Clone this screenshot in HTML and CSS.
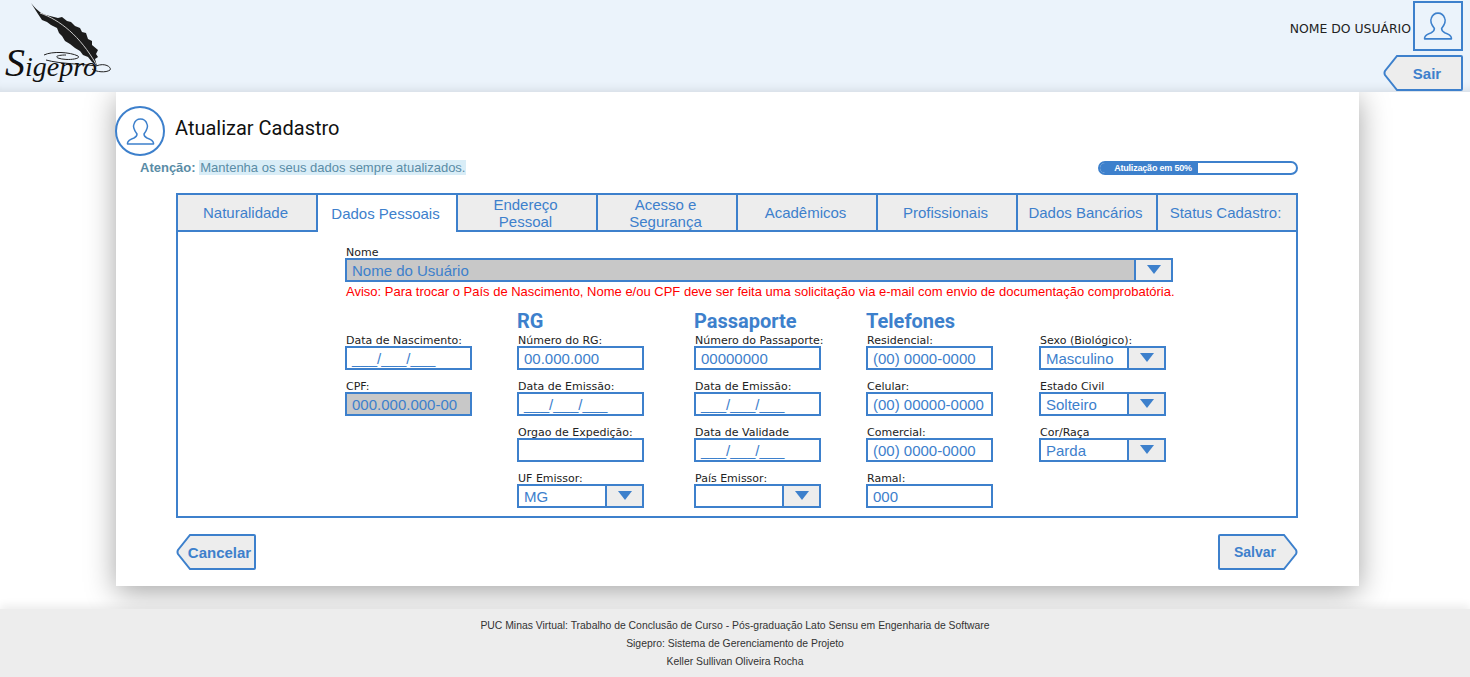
FILE: index.html
```html
<!DOCTYPE html>
<html lang="pt-BR">
<head>
<meta charset="UTF-8" />
<title>Sigepro - Atualizar Cadastro</title>
<link rel="stylesheet" href="styles.css">
</head>
<body>

<header class="topo">
  <svg class="logo" width="120" height="92" viewBox="0 0 120 92">
    <path class="pena" d="M31 3 C36 9 40 13 46 15 L58 18 L62 17 L67 21 L71 22 L75 26 L80 28 L82 32 L86 33 L88 39 L92 41 L92 45 L98 50 L96 54 L98 57 L95 59 L97 66 L92 62 L88 57 L83 55 L80 51 L75 48 L70 44 L65 41 L62 36 L59 33 L57 28 L51 25 L47 22 L42 20 L38 14 Z"/>
    <path class="veio" d="M40 13 C60 20 80 36 96 64"/>
    <path class="arabesco" d="M44 55 C52 51 70 52 78 56 C82 59 66 61 58 58 C54 56 60 55 66 55 M46 60 C60 64 84 64 96 66 C106 62 112 68 110 70 C106 73 96 72 92 69"/>
    <text class="logo-nome" x="5" y="76"><tspan class="logo-inicial">S</tspan>igepro</text>
  </svg>
  <div class="usuario">
    <div class="usuario-linha">
      <span class="usuario-nome">NOME DO USUÁRIO</span>
      <div class="usuario-foto">
        <svg width="34" height="34" viewBox="9 10 33 31"><path class="pessoa" d="M22 28c-3-4-4-8-3-10 1-3 3-5 6.500-5s5.500 2 6.500 5c1 2 0 6-3 10 0 2 1 3 3 4 3 1 6 2 6.500 5v1h-26v-1c.5-3 3.500-4 6.500-5 2-1 3-2 3-4z"/></svg>
      </div>
    </div>
    <button class="seta btn-sair" type="button">
      <svg class="seta-fundo" width="80" height="36" viewBox="0 0 80 36"><path d="M14 1 H78 Q79 1 79 2 V34 Q79 35 78 35 H14 L2 20 Q1 18 2 16 Z"/></svg>
      <span>Sair</span>
    </button>
  </div>
</header>

<main class="conteudo">
  <section class="cartao">
    <div class="titulo-linha">
      <svg class="avatar" width="50" height="50" viewBox="0 0 50 50">
        <circle class="avatar-aro" cx="25" cy="25" r="24"/>
        <path class="pessoa" d="M22 28c-3-4-4-8-3-10 1-3 3-5 6.500-5s5.500 2 6.500 5c1 2 0 6-3 10 0 2 1 3 3 4 3 1 6 2 6.500 5v1h-26v-1c.5-3 3.500-4 6.500-5 2-1 3-2 3-4z"/>
      </svg>
      <h1>Atualizar Cadastro</h1>
    </div>

    <div class="aviso-linha">
      <p class="atencao"><strong>Atenção:</strong> <mark>Mantenha os seus dados sempre atualizados.</mark></p>
      <div class="progresso"><div class="progresso-barra" style="width:50%">Atulização em 50%</div></div>
    </div>

    <div class="abas">
      <div class="aba">Naturalidade</div>
      <div class="aba ativa">Dados Pessoais</div>
      <div class="aba">Endereço Pessoal</div>
      <div class="aba">Acesso e Segurança</div>
      <div class="aba">Acadêmicos</div>
      <div class="aba">Profissionais</div>
      <div class="aba">Dados Bancários</div>
      <div class="aba">Status Cadastro:</div>
    </div>

    <div class="painel">
      <label class="rotulo">Nome</label>
      <div class="campo combo bloqueado">
        <span class="valor">Nome do Usuário</span>
        <span class="combo-seta"><i></i></span>
      </div>
      <p class="aviso-erro">Aviso: Para trocar o País de Nascimento, Nome e/ou CPF deve ser feita uma solicitação via e-mail com envio de documentação comprobatória.</p>

      <div class="grade">
        <div class="coluna">
          <h2>&nbsp;</h2>
          <div class="item"><label class="rotulo">Data de Nascimento:</label><div class="campo"><span class="valor">___/___/___</span></div></div>
          <div class="item"><label class="rotulo">CPF:</label><div class="campo bloqueado"><span class="valor">000.000.000-00</span></div></div>
        </div>
        <div class="coluna">
          <h2>RG</h2>
          <div class="item"><label class="rotulo">Número do RG:</label><div class="campo"><span class="valor">00.000.000</span></div></div>
          <div class="item"><label class="rotulo">Data de Emissão:</label><div class="campo"><span class="valor">___/___/___</span></div></div>
          <div class="item"><label class="rotulo">Orgao de Expedição:</label><div class="campo"></div></div>
          <div class="item"><label class="rotulo">UF Emissor:</label><div class="campo combo"><span class="valor">MG</span><span class="combo-seta"><i></i></span></div></div>
        </div>
        <div class="coluna">
          <h2>Passaporte</h2>
          <div class="item"><label class="rotulo">Número do Passaporte:</label><div class="campo"><span class="valor">00000000</span></div></div>
          <div class="item"><label class="rotulo">Data de Emissão:</label><div class="campo"><span class="valor">___/___/___</span></div></div>
          <div class="item"><label class="rotulo">Data de Validade</label><div class="campo"><span class="valor">___/___/___</span></div></div>
          <div class="item"><label class="rotulo">País Emissor:</label><div class="campo combo"><span class="valor"></span><span class="combo-seta"><i></i></span></div></div>
        </div>
        <div class="coluna">
          <h2>Telefones</h2>
          <div class="item"><label class="rotulo">Residencial:</label><div class="campo"><span class="valor">(00) 0000-0000</span></div></div>
          <div class="item"><label class="rotulo">Celular:</label><div class="campo"><span class="valor">(00) 00000-0000</span></div></div>
          <div class="item"><label class="rotulo">Comercial:</label><div class="campo"><span class="valor">(00) 0000-0000</span></div></div>
          <div class="item"><label class="rotulo">Ramal:</label><div class="campo"><span class="valor">000</span></div></div>
        </div>
        <div class="coluna">
          <h2>&nbsp;</h2>
          <div class="item"><label class="rotulo">Sexo (Biológico):</label><div class="campo combo"><span class="valor">Masculino</span><span class="combo-seta"><i></i></span></div></div>
          <div class="item"><label class="rotulo">Estado Civil</label><div class="campo combo"><span class="valor">Solteiro</span><span class="combo-seta"><i></i></span></div></div>
          <div class="item"><label class="rotulo">Cor/Raça</label><div class="campo combo"><span class="valor">Parda</span><span class="combo-seta"><i></i></span></div></div>
        </div>
      </div>
    </div>

    <div class="acoes">
      <button class="seta btn-cancelar" type="button">
        <svg class="seta-fundo" width="80" height="36" viewBox="0 0 80 36"><path d="M14 1 H78 Q79 1 79 2 V34 Q79 35 78 35 H14 L2 20 Q1 18 2 16 Z"/></svg>
        <span>Cancelar</span>
      </button>
      <button class="seta btn-salvar" type="button">
        <svg class="seta-fundo" width="80" height="36" viewBox="0 0 80 36"><path d="M66 1 H2 Q1 1 1 2 V34 Q1 35 2 35 H66 L78 20 Q79 18 78 16 Z"/></svg>
        <span>Salvar</span>
      </button>
    </div>
  </section>
</main>

<footer class="rodape">
  <p>PUC Minas Virtual: Trabalho de Conclusão de Curso - Pós-graduação Lato Sensu em Engenharia de Software</p>
  <p>Sigepro: Sistema de Gerenciamento de Projeto</p>
  <p>Keller Sullivan Oliveira Rocha</p>
</footer>

</body>
</html>
```

FILE: styles.css
```css
* { box-sizing: border-box; }
html, body { height: 100%; }
body { margin: 0; background: #fff; font-family: "Liberation Sans", Arial, sans-serif; color: #3d80cc; overflow: hidden; }

/* topo */
.topo { position: relative; z-index: 1; height: 92px; background: #ebf3fb; display: flex; justify-content: space-between; box-shadow: inset 0 -10px 10px -8px rgba(0,0,0,.1); }
.logo { display: block; }
.pena { fill: #1c1c1c; }
.veio { fill: none; stroke: #c9c9c9; stroke-width: 1; }
.arabesco { fill: none; stroke: #222; stroke-width: 1; }
.logo-nome { font-family: "Liberation Serif", serif; font-style: italic; font-size: 28px; fill: #111; }
.logo-inicial { font-size: 40px; }
.usuario { width: 181px; margin-right: 7px; padding-top: 1px; display: flex; flex-direction: column; align-items: flex-end; gap: 4px; }
.usuario-linha { display: flex; align-items: center; gap: 2px; }
.usuario-nome { font-family: "DejaVu Sans", sans-serif; font-size: 12.400px; color: #222; padding-top: 4px; white-space: nowrap; }
.usuario-foto { width: 50px; height: 50px; border: 2px solid #3d80cc; display: flex; align-items: center; justify-content: center; }
.pessoa { fill: none; stroke: #3d80cc; stroke-width: 1.500; stroke-linejoin: round; }

/* botoes com seta */
.seta { position: relative; height: 36px; padding: 0; border: none; background: none; font: bold 15px "Liberation Sans", Arial, sans-serif; color: #3d80cc; }
.seta span { position: relative; }
.seta-fundo { position: absolute; left: 0; top: 0; width: 100%; height: 100%; }
.seta-fundo path { fill: #ededed; stroke: #3d80cc; stroke-width: 2; vector-effect: non-scaling-stroke; }
.btn-sair { width: 80px; padding-left: 8px; }
.btn-cancelar { width: 80px; padding-left: 7px; }
.btn-salvar { width: 80px; padding-right: 6px; font-size: 14px; }

/* cartao */
.conteudo { height: 517px; padding-left: 116px; }
.cartao { width: 1243px; height: 494px; background: #fff; box-shadow: 0 6px 28px rgba(0,0,0,.36); padding: 14px 61px 0 60px; }
.titulo-linha { display: flex; align-items: center; gap: 10px; margin-left: -61px; height: 50px; }
.avatar { flex: none; }
.avatar-aro { fill: #fff; stroke: #3d80cc; stroke-width: 2; }
h1 { margin: 0 0 7px; font: 400 20px Roboto, sans-serif; color: #111; }
.aviso-linha { display: flex; justify-content: space-between; align-items: center; height: 23px; margin-left: -36px; }
.atencao { margin: 0; font-size: 13px; color: #5a8ca6; }
.atencao mark { background: #d9edf7; color: #5a8ca6; padding: 0 1px; }
.progresso { width: 200px; height: 14px; border: 2px solid #3d80cc; border-radius: 7px; background: #fff; overflow: hidden; }
.progresso-barra { height: 100%; padding-left: 8px; background: #3d80cc; color: #fff; font-size: 9px; font-weight: bold; line-height: 10px; text-align: center; letter-spacing: -.2px; white-space: nowrap; }

/* abas */
.abas { display: flex; height: 39px; margin-top: 14px; border: 2px solid #3d80cc; border-bottom: none; }
.aba { flex: 1; padding: 0 12px 0 9px; background: #ededed; border-right: 2px solid #3d80cc; border-bottom: 2px solid #3d80cc; display: flex; align-items: center; justify-content: center; text-align: center; font-size: 15px; line-height: 17px; }
.aba:last-child { border-right: none; }
.aba.ativa { background: #fff; border-bottom: none; }

.painel { height: 286px; padding: 14px 123px 0 167px; border: 2px solid #3d80cc; border-top: none; }
.rotulo { display: block; height: 12px; padding-left: 1px; font: 11px/14px "DejaVu Sans", sans-serif; color: #222; white-space: nowrap; }
.campo { height: 24px; border: 2px solid #3d80cc; background: #fff; display: flex; font-size: 15px; line-height: 21px; }
.campo .valor { flex: 1; padding-left: 5px; white-space: nowrap; }
.campo.bloqueado { background: #c8c8c8; }
.combo-seta { width: 37px; flex: none; background: #ededed; border-left: 2px solid #3d80cc; display: flex; align-items: center; justify-content: center; }
.combo-seta i { width: 0; height: 0; border-left: 7px solid transparent; border-right: 7px solid transparent; border-top: 9px solid #3d80cc; margin-bottom: 2px; }
.aviso-erro { margin: 1px 0 0; padding-left: 1px; font-size: 13px; line-height: 18px; color: #f00; white-space: nowrap; }

.grade { display: grid; grid-template-columns: 172px 177px 172px 173px 127px; margin-top: 10px; }
.coluna { width: 127px; }
h2 { margin: 0; height: 23px; font: bold 20px/20px Roboto, sans-serif; white-space: nowrap; color: #3d80cc; }
.item { margin-bottom: 10px; }

/* botoes */
.acoes { display: flex; justify-content: space-between; margin-top: 16px; }

/* rodape */
.rodape { position: relative; height: 68px; background: #ededed; box-shadow: 0 -4px 8px rgba(0,0,0,.07); padding-top: 8px; text-align: center; }
.rodape p { margin: 0; font-size: 10.400px; line-height: 18px; color: #333; }
```
